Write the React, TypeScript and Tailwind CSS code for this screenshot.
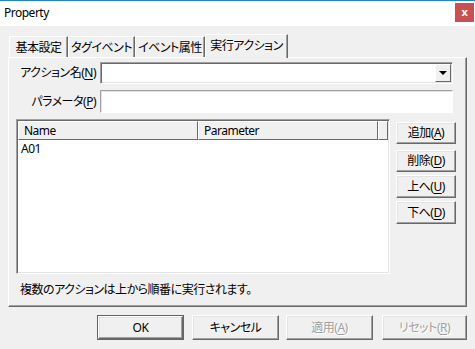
import React from "react";

//Mnemonic letter with underline
const Key = ({ k }: { k: string }) => (
  <>
    (<span className="underline underline-offset-[2px]">{k}</span>)
  </>
);

const Button = ({
  children,
  className = "",
  disabled = false,
}: {
  children: React.ReactNode;
  className?: string;
  disabled?: boolean;
}) => (
  <div
    className={
      "flex items-center justify-center bg-[#f0f0f0] border border-t-white border-l-white border-r-[#696969] border-b-[#696969] shadow-[inset_-1px_-1px_0_#a0a0a0,inset_1px_1px_0_#e3e3e3] " +
      (disabled ? "text-[#a0a0a0] [text-shadow:1px_1px_0_#fff] " : "") +
      className
    }
  >
    {children}
  </div>
);

const Tab = ({ label, width }: { label: string; width: string }) => (
  <div
    className={
      "h-[21px] flex items-center justify-center pt-[1px] border-t border-l border-r border-t-white border-l-white border-r-[#696969] shadow-[inset_-1px_0_0_#a0a0a0] " +
      width
    }
  >
    {label}
  </div>
);

const App = () => {
  return (
    <div className="w-[475px] h-[349px] overflow-hidden bg-[#f0f0f0] border-t border-[#1883d7] flex flex-col text-[12px] leading-[16px] tracking-[-0.5px] text-black font-['Noto_Sans','Noto_Sans_CJK_JP',sans-serif] [font-feature-settings:'palt']">
      {/* title bar */}
      <div className="h-[25px] bg-white flex items-start justify-between">
        <div className="pl-[4px] pt-[4px] text-[12px]">Property</div>
        <div className="mt-[2px] mr-[1px] w-[19px] h-[19px] bg-[#c75050] text-white flex items-center justify-center text-[11px] font-bold leading-none pb-[2px]">
          x
        </div>
      </div>

      <div className="px-[8px] pt-[8px]">
        {/* tabs */}
        <div className="flex items-end pl-[1px] h-[23px]">
          <Tab label="基本設定" width="w-[59px]" />
          <Tab label="タグイベント" width="w-[67px]" />
          <Tab label="イベント属性" width="w-[70px]" />
          <div className="relative z-10 -mb-[1px] h-[24px] w-[83px] bg-[#f0f0f0] flex items-start justify-center pt-[3px] border-t border-l border-r border-t-white border-l-white border-r-[#696969] shadow-[inset_-1px_0_0_#a0a0a0]">
            実行アクション
          </div>
        </div>

        {/* panel */}
        <div className="w-[459px] h-[250px] border border-t-white border-l-white border-r-[#696969] border-b-[#696969] shadow-[inset_-1px_-1px_0_#a0a0a0] flex flex-col">
          <div className="flex items-center mt-[4px]">
            <div className="w-[87px] text-right">
              アクション名<Key k="N" />
            </div>
            <div className="ml-[4px] w-[353px] h-[22px] bg-white border border-t-[#a0a0a0] border-l-[#a0a0a0] border-b-white border-r-white shadow-[inset_1px_1px_0_#696969,inset_-1px_-1px_0_#e3e3e3] flex justify-end items-center pr-[1px]">
              <div className="w-[16px] h-[18px] flex items-center justify-center bg-[#f0f0f0] border border-t-white border-l-white border-r-[#696969] border-b-[#696969]">
                <svg width="8" height="4" viewBox="0 0 8 4">
                  <path d="M0 0H8L4 4Z" fill="#000" />
                </svg>
              </div>
            </div>
          </div>

          <div className="flex items-center mt-[6px]">
            <div className="w-[87px] text-right">
              パラメータ<Key k="P" />
            </div>
            <div className="ml-[4px] w-[353px] h-[23px] bg-white border border-t-[#a0a0a0] border-l-[#a0a0a0] border-b-white border-r-white shadow-[inset_1px_1px_0_#e3e3e3]" />
          </div>

          <div className="flex mt-[6px]">
            {/* list view */}
            <div className="ml-[7px] w-[374px] h-[155px] bg-white border border-t-[#a0a0a0] border-l-[#a0a0a0] border-b-white border-r-white shadow-[inset_1px_1px_0_#696969,inset_-1px_-1px_0_#e3e3e3] p-[1px] flex flex-col">
              <div className="flex h-[19px] bg-[#f0f0f0]">
                <div className="w-[180px] pl-[5px] flex items-center border-r border-b border-r-[#696969] border-b-[#696969] border-t border-l border-t-white border-l-white">
                  Name
                </div>
                <div className="w-[180px] pl-[5px] flex items-center border-r border-b border-r-[#696969] border-b-[#696969] border-t border-l border-t-white border-l-white">
                  Parameter
                </div>
                <div className="flex-1 border-r border-b border-r-[#696969] border-b-[#696969] border-t border-l border-t-white border-l-white" />
              </div>
              <div className="pl-[3px] pt-[1px]">A01</div>
            </div>

            <div className="ml-[6px] w-[60px] pt-[3px] flex flex-col">
              <Button className="h-[22px]">
                追加<Key k="A" />
              </Button>
              <Button className="h-[22px] mt-[6px]">
                削除<Key k="D" />
              </Button>
              <Button className="h-[23px] mt-[3px]">
                上へ<Key k="U" />
              </Button>
              <Button className="h-[23px] mt-[3px]">
                下へ<Key k="D" />
              </Button>
            </div>
          </div>

          <div className="ml-[11px] mt-[8px]">複数のアクションは上から順番に実行されます。</div>
        </div>

        {/* dialog buttons */}
        <div className="flex mt-[8px] ml-[89px]">
          <div className="w-[87px] h-[25px] border border-[#646464]">
            <Button className="h-full">OK</Button>
          </div>
          <Button className="w-[87px] h-[25px] ml-[8px]">キャンセル</Button>
          <Button className="w-[87px] h-[25px] ml-[7px]" disabled>
            適用<Key k="A" />
          </Button>
          <Button className="w-[85px] h-[25px] ml-[9px]" disabled>
            リセット<Key k="R" />
          </Button>
        </div>
      </div>
    </div>
  );
};

export default App;
